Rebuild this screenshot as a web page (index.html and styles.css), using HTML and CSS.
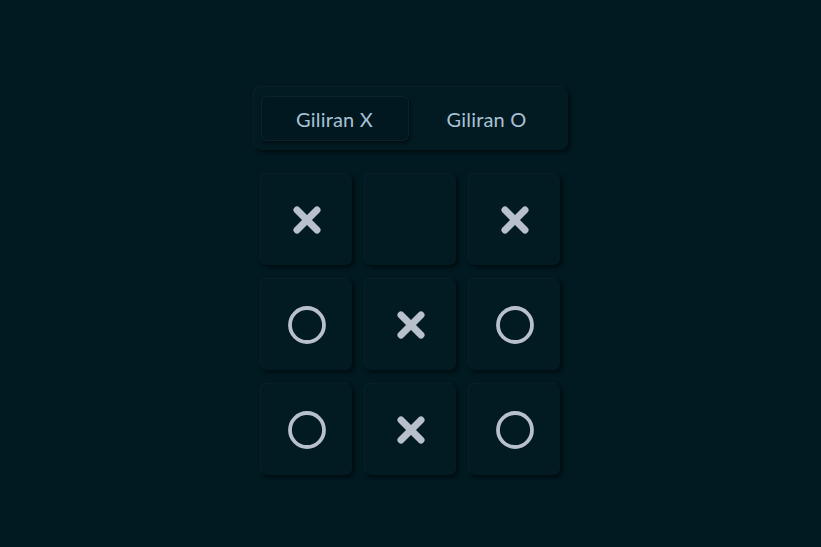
FILE: index.html
```html
<!DOCTYPE html>
<html lang="id">
<head>
<meta charset="utf-8">
<title>Tic Tac Toe</title>
<link rel="stylesheet" href="styles.css">
</head>
<body>
<main class="game">
  <div class="turns">
    <div class="turn active">Giliran X</div>
    <div class="turn">Giliran O</div>
  </div>
  <div class="board">
    <div class="cell"><svg class="mark" viewBox="0 0 30 30"><path d="M5 5 L25 25 M25 5 L5 25"/></svg></div>
    <div class="cell"></div>
    <div class="cell"><svg class="mark" viewBox="0 0 30 30"><path d="M5 5 L25 25 M25 5 L5 25"/></svg></div>
    <div class="cell"><svg class="ring" viewBox="0 0 40 40"><circle cx="20" cy="20" r="17"/></svg></div>
    <div class="cell"><svg class="mark" viewBox="0 0 30 30"><path d="M5 5 L25 25 M25 5 L5 25"/></svg></div>
    <div class="cell"><svg class="ring" viewBox="0 0 40 40"><circle cx="20" cy="20" r="17"/></svg></div>
    <div class="cell"><svg class="ring" viewBox="0 0 40 40"><circle cx="20" cy="20" r="17"/></svg></div>
    <div class="cell"><svg class="mark" viewBox="0 0 30 30"><path d="M5 5 L25 25 M25 5 L5 25"/></svg></div>
    <div class="cell"><svg class="ring" viewBox="0 0 40 40"><circle cx="20" cy="20" r="17"/></svg></div>
  </div>
</main>
</body>
</html>
```
FILE: styles.css
```css
html, body {
  margin: 0;
  padding: 0;
  background: #011920;
  height: 100%;
}
body {
  font-family: "Lato", "Noto Sans", sans-serif;
}
.game {
  display: flex;
  flex-direction: column;
  align-items: center;
  padding-top: 87px;
  gap: 24px;
}
.turns {
  display: flex;
  gap: 4px;
  width: 314px;
  height: 63px;
  box-sizing: border-box;
  padding: 9px 7px;
  border-radius: 7px;
  background: #021a21;
  box-shadow: 2px 2px 4px rgba(0, 0, 0, 0.55), -1px -1px 2px rgba(255, 255, 255, 0.05);
}
.turn {
  flex: 1;
  display: flex;
  align-items: center;
  justify-content: center;
  color: #a8c2d6;
  font-size: 20px;
  letter-spacing: 0.2px;
  border-radius: 6px;
}
.turn.active {
  background: #011820;
  box-shadow: inset 0 0 0 1px rgba(255, 255, 255, 0.05), 1px 2px 3px rgba(0, 0, 0, 0.5);
}
.board {
  display: grid;
  grid-template-columns: repeat(3, 91px);
  grid-auto-rows: 91px;
  gap: 14px 13px;
}
.cell {
  display: flex;
  align-items: center;
  justify-content: center;
  background: #021a21;
  border-radius: 6px;
  box-shadow: 2px 2px 4px rgba(0, 0, 0, 0.6), -1px -1px 2px rgba(255, 255, 255, 0.05);
}
.mark {
  width: 30px;
  height: 30px;
}
.mark path {
  stroke: #b8c0cb;
  stroke-width: 7;
  stroke-linecap: round;
  fill: none;
}
.ring {
  width: 40px;
  height: 40px;
}
.ring circle {
  stroke: #b8c0cb;
  stroke-width: 3.8;
  fill: none;
}
```
